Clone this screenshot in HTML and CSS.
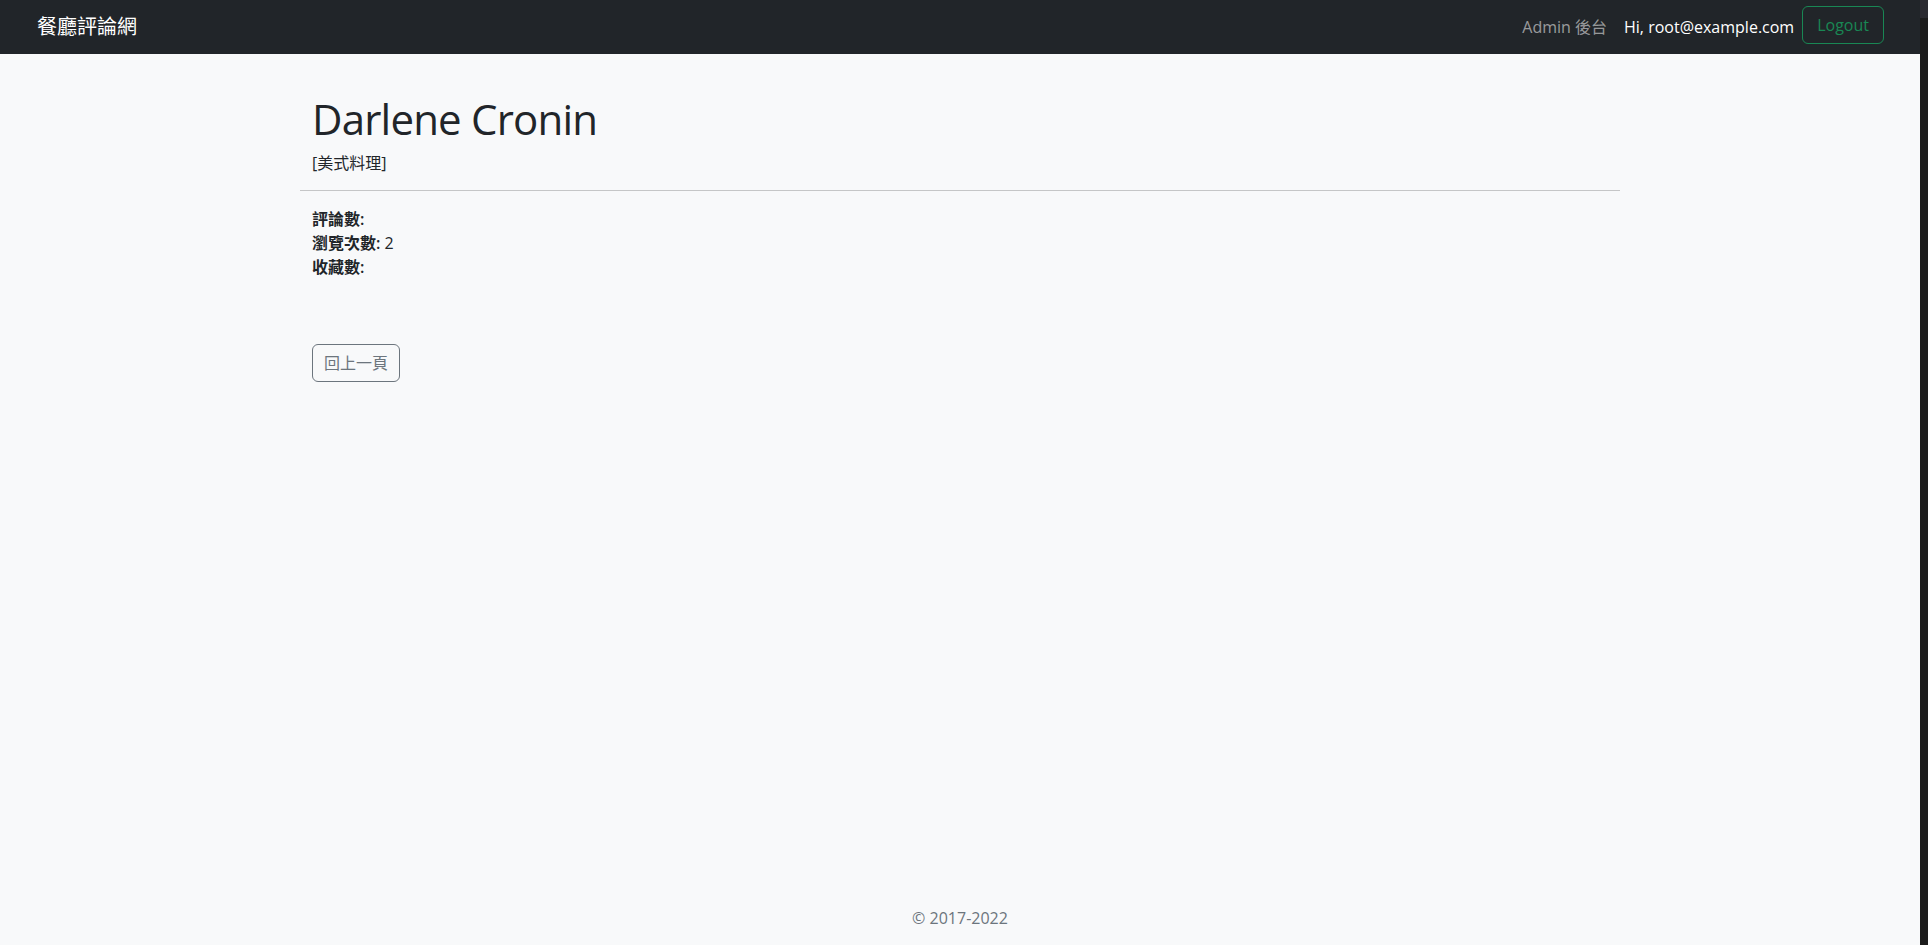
FILE: index.html
```html
<!DOCTYPE html>
<html lang="zh-Hant">
<head>
<meta charset="utf-8">
<title>餐廳評論網</title>
<link rel="stylesheet" href="styles.css">
</head>
<body>
<div class="page">
  <nav class="navbar">
    <a class="brand" href="#">餐廳評論網</a>
    <div class="nav-right">
      <a class="nav-link" href="#">Admin 後台</a>
      <span class="user">Hi, root@example.com</span>
      <button class="btn btn-green">Logout</button>
    </div>
  </nav>
  <main class="main">
    <div class="container">
      <div class="head">
        <h1 class="title">Darlene Cronin</h1>
        <p class="category">[美式料理]</p>
      </div>
      <hr class="divider">
      <ul class="stats">
        <li><strong>評論數:</strong> </li>
        <li><strong>瀏覽次數:</strong> 2</li>
        <li><strong>收藏數:</strong> </li>
      </ul>
      <button class="btn btn-gray">回上一頁</button>
    </div>
  </main>
  <footer class="footer">© 2017-2022</footer>
</div>
<div class="scrollbar"></div>
</body>
</html>
```
FILE: styles.css
```css
html { background: #1c1c1c; }
body {
  margin: 0;
  font-family: "Open Sans", "Noto Sans CJK TC", sans-serif;
  font-size: 16px;
  line-height: 1.5;
  color: #212529;
}
.page {
  width: 1920px;
  min-height: 945px;
  background: #f8f9fa;
  display: flex;
  flex-direction: column;
}
.navbar {
  height: 54px;
  box-sizing: border-box;
  background: #212529;
  display: flex;
  align-items: center;
  justify-content: space-between;
  padding: 0 36px 0 37px;
}
.brand {
  color: #fff;
  text-decoration: none;
  font-size: 20px;
  line-height: 30px;
}
.nav-right { display: flex; align-items: center; }
.nav-link { color: rgba(255,255,255,.55); text-decoration: none; margin-right: 17px; margin-top: -1px; }
.user { color: #fff; margin-right: 8px; margin-top: -1px; }
.btn {
  font: inherit;
  font-size: 16px;
  line-height: 24px;
  padding: 6px 12px;
  background: transparent;
  border-radius: 6px;
  border: 1px solid;
  cursor: pointer;
}
.btn-green { color: #198754; border-color: #198754; margin-top: -4px; padding: 6px 14px; }
.btn-gray { color: #6c757d; border-color: #6c757d; padding: 6px 11px; margin: 65px 0 0 12px; }
.main { flex: 1; }
.container { width: 1320px; margin: 0 auto; }
.head { padding: 40px 12px 0; }
.title {
  margin: 0 0 7px;
  font-size: 42px;
  font-weight: 400;
  letter-spacing: -0.8px;
  line-height: 1.2;
}
.category { margin: 0; line-height: 24px; height: 24px; }
.divider { border: 0; border-top: 1px solid #c5c6c7; margin: 15px 0 16px; }
.stats { list-style: none; margin: 0; padding: 0 12px; }
.stats li { height: 24px; line-height: 24px; }
.stats strong { font-weight: 600; }
.footer {
  text-align: center;
  color: #6c757d;
  padding: 0 0 15px;
  line-height: 24px;
}
.scrollbar {
  position: fixed;
  top: 0; right: 0;
  width: 8px; height: 18px;
  background: #2a2a30;
}
```
